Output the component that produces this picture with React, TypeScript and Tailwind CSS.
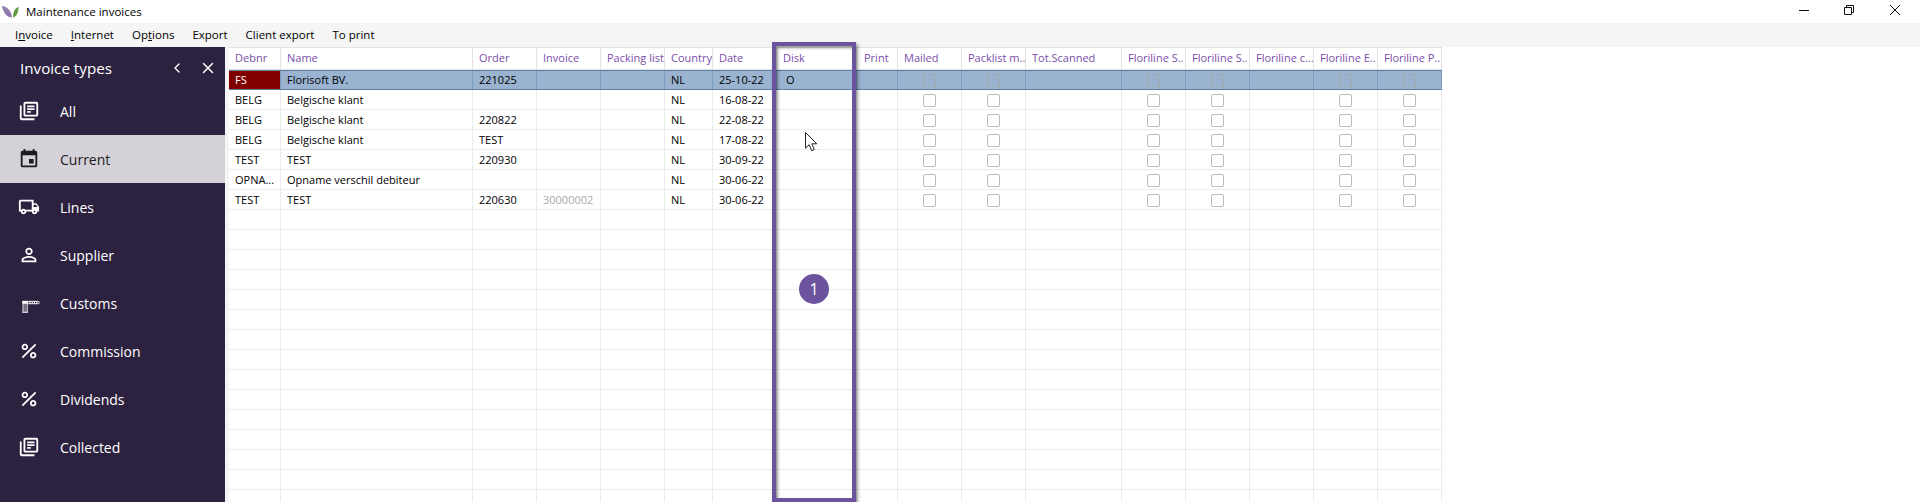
import { ChevronLeft, X } from "lucide-react";
import {
  MdEvent,
  MdOutlineLibraryBooks,
  MdOutlineLocalShipping,
  MdOutlinePersonOutline,
  MdPercent,
} from "react-icons/md";
import type { ComponentType, ReactNode } from "react";

type Column = { title: string; width: string; check?: boolean };

const columns: Column[] = [
  { title: "Debnr", width: "w-[52px]" },
  { title: "Name", width: "w-[192px]" },
  { title: "Order", width: "w-[64px]" },
  { title: "Invoice", width: "w-[64px]" },
  { title: "Packing list", width: "w-[64px]" },
  { title: "Country", width: "w-[48px]" },
  { title: "Date", width: "w-[64px]" },
  { title: "Disk", width: "w-[80px]" },
  { title: "Print", width: "w-[41px]" },
  { title: "Mailed", width: "w-[64px]", check: true },
  { title: "Packlist m...", width: "w-[64px]", check: true },
  { title: "Tot.Scanned", width: "w-[96px]" },
  { title: "Floriline S..", width: "w-[64px]", check: true },
  { title: "Floriline S..", width: "w-[64px]", check: true },
  { title: "Floriline c...", width: "w-[64px]" },
  { title: "Floriline E..", width: "w-[64px]", check: true },
  { title: "Floriline P..", width: "w-[64px]", check: true },
];

const rows = [
  ["FS", "Florisoft BV.", "221025", "", "", "NL", "25-10-22", "O"],
  ["BELG", "Belgische klant", "", "", "", "NL", "16-08-22", ""],
  ["BELG", "Belgische klant", "220822", "", "", "NL", "22-08-22", ""],
  ["BELG", "Belgische klant", "TEST", "", "", "NL", "17-08-22", ""],
  ["TEST", "TEST", "220930", "", "", "NL", "30-09-22", ""],
  ["OPNA...", "Opname verschil debiteur", "", "", "", "NL", "30-06-22", ""],
  ["TEST", "TEST", "220630", "30000002", "", "NL", "30-06-22", ""],
];

const emptyRows = Array.from({ length: 15 }, (_, i) => i);

function BarrierIcon({ className }: { className?: string }) {
  return (
    <svg viewBox="0 0 24 24" className={className} fill="none" stroke="currentColor">
      <path d="M5.500 22V10.500h4.500V22M4.500 22.200h6.500" strokeWidth="1.100" />
      <path d="M5 10h5.500v2.500H5z" fill="currentColor" strokeWidth="0.600" />
      <path d="M7.700 12v10" strokeWidth="0.800" />
      <path d="M10.500 10.200h11.500a1.200 1.200 0 0 1 0 2.600H10.500" strokeWidth="1" />
      <path d="M13 10.200v2.600M15.500 10.200v2.600M18 10.200v2.600M20.500 10.200v2.600" strokeWidth="1.100" />
    </svg>
  );
}

const navItems: { label: string; icon: ComponentType<{ className?: string }>; active?: boolean }[] = [
  { label: "All", icon: MdOutlineLibraryBooks },
  { label: "Current", icon: MdEvent, active: true },
  { label: "Lines", icon: MdOutlineLocalShipping },
  { label: "Supplier", icon: MdOutlinePersonOutline },
  { label: "Customs", icon: BarrierIcon },
  { label: "Commission", icon: MdPercent },
  { label: "Dividends", icon: MdPercent },
  { label: "Collected", icon: MdOutlineLibraryBooks },
];

const menu: ReactNode[] = [
  <>
    I<u>n</u>voice
  </>,
  <>
    <u>I</u>nternet
  </>,
  <>
    Op<u>t</u>ions
  </>,
  "Export",
  "Client export",
  "To print",
];

function Checkbox({ selected }: { selected: boolean }) {
  return (
    <div
      className={`h-[13px] w-[13px] rounded-[2px] border ${
        selected ? "border-[#a5a9ad]" : "border-[#bcbcbc]"
      }`}
    />
  );
}

function Row({ cells, selected, empty }: { cells: string[]; selected?: boolean; empty?: boolean }) {
  return (
    <div
      className={`flex h-5 w-[1213px] shrink-0 text-[11px] text-black ${
        selected ? "border-y border-[#5f80a3] bg-[#99b3d1]" : "border-b border-[#ebebeb]"
      }`}
    >
      {columns.map((col, i) => (
        <div
          key={i}
          className={`${col.width} flex shrink-0 items-center overflow-hidden whitespace-nowrap border-r ${
            col.check ? "justify-center" : i === 7 ? "pl-[9px]" : "pl-[6px]"
          } ${selected ? "border-[#7f9bbd]" : "border-[#ebebeb] pt-px"} ${
            selected && i === 0 ? "bg-[#800000] text-white" : ""
          } ${i === 3 ? "text-[#aaaaaa]" : ""}`}
        >
          {col.check ? !empty && <Checkbox selected={!!selected} /> : cells[i]}
        </div>
      ))}
    </div>
  );
}

export default function App() {
  return (
    <div className="flex h-[502px] w-[1920px] flex-col overflow-hidden bg-white font-['Open_Sans',sans-serif] text-black">
      <div className="flex h-[23px] shrink-0 items-center bg-white">
        <svg viewBox="0 0 18 12" className="ml-[2px] h-3 w-[18px]">
          <path d="M0 0c5 .5 9 4 10 11.500C5 11.500 1.500 7 0 0z" fill="#8f79ad" />
          <path d="M16.500 1c-3.500 1-5.500 5-5.500 10.500 3.500-1 5.500-5 5.500-10.500z" fill="#5f9b3c" />
        </svg>
        <span className="ml-[6px] text-[11.5px]">Maintenance invoices</span>
        <div className="mb-[3px] ml-auto flex items-center text-[#111]">
          <svg viewBox="0 0 10 10" className="mr-[35px] h-[10px] w-[10px]" fill="none" stroke="currentColor">
            <path d="M0 5.500h10" />
          </svg>
          <svg viewBox="0 0 10 10" className="mr-[36px] h-[10px] w-[10px]" fill="none" stroke="currentColor">
            <path d="M.5 2.500h7v7h-7zM2.500 2.500v-2h7v7h-2" />
          </svg>
          <svg viewBox="0 0 10 10" className="mr-[20px] h-[10px] w-[10px]" fill="none" stroke="currentColor">
            <path d="M0 0l10 10M10 0L0 10" />
          </svg>
        </div>
      </div>

      <div className="flex h-6 shrink-0 items-center gap-[18px] bg-[#f5f5f5] pl-[15px] text-[11.5px]">
        {menu.map((item, i) => (
          <span key={i}>{item}</span>
        ))}
      </div>

      <div className="relative flex min-h-0 flex-1">
        <aside className="w-[225px] shrink-0 bg-[#2c2240] text-white">
          <div className="flex h-10 items-center pl-5 pt-[2px] text-[15.2px]">
            <span className="w-[149px]">Invoice types</span>
            <ChevronLeft className="h-[16px] w-[16px]" strokeWidth={2} />
            <X className="ml-[14px] h-[18px] w-[18px]" strokeWidth={2} />
          </div>
          {navItems.map((item) => {
            const Icon = item.icon;
            return (
              <div
                key={item.label}
                className={`flex h-12 items-center pl-[18px] text-[14px] ${
                  item.active ? "bg-[#d4d1d8] text-[#1c1c1c]" : ""
                }`}
              >
                <Icon className="h-[22px] w-[22px]" />
                <span className="ml-5">{item.label}</span>
              </div>
            );
          })}
        </aside>

        <div className="w-1 shrink-0 bg-[#f5f5f5]" />

        <div className="flex min-w-0 flex-1 flex-col overflow-hidden">
          <div className="flex h-[23px] w-[1213px] shrink-0 border-y border-[#e2e2e2] text-[11px] text-[#7a4ea8]">
            {columns.map((col, i) => (
              <div
                key={i}
                className={`${col.width} flex shrink-0 items-center overflow-hidden whitespace-nowrap border-r border-[#e2e2e2] ${
                  i === 8 ? "pl-[7px]" : "pl-[6px]"
                }`}
              >
                {col.title}
              </div>
            ))}
          </div>
          {rows.map((cells, i) => (
            <Row key={i} cells={cells} selected={i === 0} />
          ))}
          {emptyRows.map((i) => (
            <Row key={i} cells={[]} empty />
          ))}
        </div>

        {/* callout over the Disk column */}
        <div className="absolute left-[772px] top-[-5px] h-[460px] w-[84px] border-4 border-[#6b539d] shadow-[2px_2px_3px_rgba(0,0,0,0.4),inset_2px_2px_3px_rgba(0,0,0,0.4)]" />
        <div className="absolute left-[799px] top-[227px] flex h-[30px] w-[30px] items-center justify-center rounded-full bg-[#6b539d] text-[16px] text-white">
          1
        </div>
        <svg viewBox="0 0 13 20" className="absolute left-[805px] top-[85px] h-5 w-[13px]">
          <path
            d="M.5.5v15.600l3.700-3.400 2.500 6 2.600-1.100-2.500-5.800h5z"
            fill="#fff"
            stroke="#222"
            strokeWidth="1"
          />
        </svg>
      </div>
    </div>
  );
}
